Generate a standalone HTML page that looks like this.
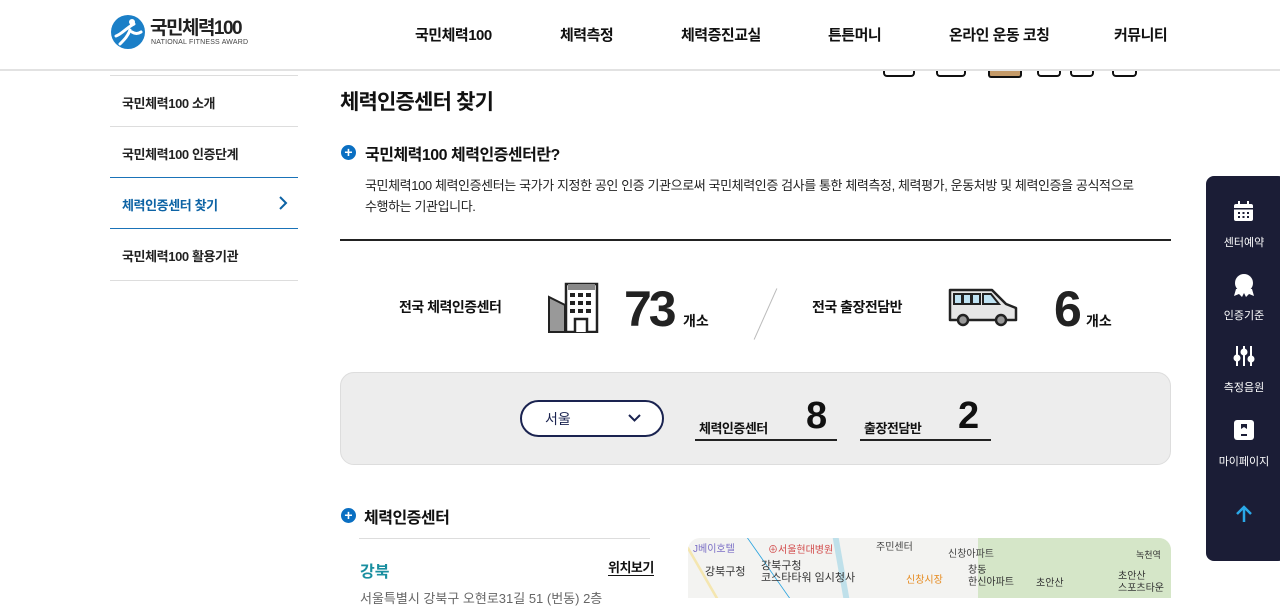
<!DOCTYPE html>
<html><head><meta charset="utf-8"><style>
*{margin:0;padding:0;box-sizing:border-box}
body{width:1280px;height:592px;overflow:hidden;background:#fff;font-family:"Liberation Sans","Noto Sans CJK KR",sans-serif;color:#111;position:relative}
.abs{position:absolute}
.hdr{position:absolute;left:0;top:0;width:1280px;height:71px;border-bottom:2px solid #e2e2e2;background:#fff;z-index:3}
.nav{position:absolute;top:24px;font-size:15px;font-weight:bold;color:#111;letter-spacing:-0.5px}
.side a{position:absolute;left:110px;width:188px;font-size:13px;font-weight:bold;color:#222;padding-left:12px;letter-spacing:-0.4px}
.hl{position:absolute;height:1px;background:#ddd}
.plus{position:absolute;width:15px;height:15px;border-radius:50%;background:#0a6fc2;color:#fff;font-size:14px;line-height:15px;text-align:center;font-weight:bold}
</style></head><body>
<div class="hdr">
 <svg class="abs" style="left:110px;top:14px" width="36" height="36" viewBox="0 0 36 36"><circle cx="18" cy="18" r="17" fill="#1b7fc7"/><path d="M6 22c6-2 10-8 18-12M10 30c4-4 8-8 10-14M22 18c3 2 6 2 9 0" stroke="#fff" stroke-width="3" fill="none" stroke-linecap="round"/><circle cx="22" cy="8" r="3" fill="#fff"/></svg>
 <div class="abs" style="left:150px;top:13px;font-size:19px;font-weight:bold;letter-spacing:-1.5px;color:#222">국민체력100</div>
 <div class="abs" style="left:151px;top:39px;font-size:7px;color:#444;letter-spacing:.2px">NATIONAL FITNESS AWARD</div>
 <div class="nav" style="left:415px">국민체력100</div>
 <div class="nav" style="left:560px">체력측정</div>
 <div class="nav" style="left:681px">체력증진교실</div>
 <div class="nav" style="left:828px">튼튼머니</div>
 <div class="nav" style="left:949px">온라인 운동 코칭</div>
 <div class="nav" style="left:1114px">커뮤니티</div>
</div>
<div class="abs" style="left:883px;top:68px;width:32px;height:9px;border:2px solid #111;border-top:none;border-radius:0 0 4px 4px"></div>
<div class="abs" style="left:936px;top:68px;width:30px;height:9px;border:2px solid #111;border-top:none;border-radius:0 0 4px 4px"></div>
<div class="abs" style="left:988px;top:68px;width:34px;height:10px;background:#c49a68;border:2px solid #111;border-top:none;border-radius:0 0 3px 3px"></div>
<div class="abs" style="left:1037px;top:68px;width:24px;height:9px;border:2px solid #111;border-top:none;border-radius:0 0 4px 4px"></div>
<div class="abs" style="left:1070px;top:68px;width:24px;height:9px;border:2px solid #111;border-top:none;border-radius:0 0 4px 4px"></div>
<div class="abs" style="left:1112px;top:68px;width:25px;height:9px;border:2px solid #111;border-top:none;border-radius:0 0 4px 4px"></div>

<div class="side">
 <div class="hl" style="left:110px;top:75px;width:188px"></div>
 <a style="top:93px">국민체력100 소개</a>
 <div class="hl" style="left:110px;top:126px;width:188px"></div>
 <a style="top:144px">국민체력100 인증단계</a>
 <div class="hl" style="left:110px;top:177px;width:188px;background:#1a73b8"></div>
 <a style="top:195px;color:#0d63a5">체력인증센터 찾기</a>
 <svg class="abs" style="left:278px;top:196px" width="10" height="14"><path d="M2 1l6 6-6 6" stroke="#0d63a5" stroke-width="2" fill="none"/></svg>
 <div class="hl" style="left:110px;top:228px;width:188px;background:#1a73b8"></div>
 <a style="top:246px">국민체력100 활용기관</a>
 <div class="hl" style="left:110px;top:280px;width:188px"></div>
</div>

<div class="abs" style="left:340px;top:86px;font-size:21px;font-weight:bold;letter-spacing:-.8px">체력인증센터 찾기</div>
<div class="plus" style="left:341px;top:145px">+</div>
<div class="abs" style="left:365px;top:141px;font-size:16px;font-weight:bold;letter-spacing:-.5px">국민체력100 체력인증센터란?</div>
<div class="abs" style="left:365px;top:175px;width:820px;font-size:13px;line-height:21px;color:#222;letter-spacing:-0.4px">국민체력100 체력인증센터는 국가가 지정한 공인 인증 기관으로써 국민체력인증 검사를 통한 체력측정, 체력평가, 운동처방 및 체력인증을 공식적으로<br>수행하는 기관입니다.</div>
<div class="abs" style="left:340px;top:239px;width:831px;height:2px;background:#222"></div>

<div class="abs" style="left:399px;top:297px;font-size:14px;font-weight:bold;letter-spacing:-.5px">전국 체력인증센터</div>
<svg class="abs" style="left:548px;top:281px" width="52" height="52" viewBox="0 0 52 52"><path d="M1 16l16 8v27H1z" fill="#999" stroke="#222" stroke-width="2"/><rect x="18" y="3" width="31" height="48" fill="#fff" stroke="#222" stroke-width="2.5"/><rect x="20" y="3" width="27" height="6" fill="#888"/><g fill="#222"><rect x="22" y="12" width="5" height="4"/><rect x="30" y="12" width="5" height="4"/><rect x="38" y="12" width="5" height="4"/><rect x="22" y="20" width="5" height="4"/><rect x="30" y="20" width="5" height="4"/><rect x="38" y="20" width="5" height="4"/><rect x="22" y="28" width="5" height="4"/><rect x="30" y="28" width="5" height="4"/><rect x="38" y="28" width="5" height="4"/></g><path d="M27 51V38h12v13" fill="#fff" stroke="#222" stroke-width="2.5"/></svg>
<div class="abs" style="left:624px;top:280px;font-size:50px;font-weight:bold;letter-spacing:-3px;color:#222">73</div>
<div class="abs" style="left:683px;top:311px;font-size:14px;font-weight:bold">개소</div>
<div class="abs" style="left:765px;top:286px;width:1px;height:56px;background:#bbb;transform:rotate(24deg)"></div>
<div class="abs" style="left:812px;top:297px;font-size:14px;font-weight:bold;letter-spacing:-.5px">전국 출장전담반</div>
<svg class="abs" style="left:947px;top:286px" width="72" height="42" viewBox="0 0 72 42"><path d="M3 4h42l14 14 10 4v12H3z" fill="#e6e6e6" stroke="#222" stroke-width="2.5" stroke-linejoin="round"/><g fill="#bfe2f2" stroke="#222" stroke-width="2"><rect x="7" y="8" width="8" height="10"/><rect x="16" y="8" width="8" height="10"/><rect x="25" y="8" width="8" height="10"/><path d="M36 8h8l8 10H36z"/></g><circle cx="16" cy="34" r="5" fill="#999" stroke="#222" stroke-width="2.5"/><circle cx="54" cy="34" r="5" fill="#999" stroke="#222" stroke-width="2.5"/></svg>
<div class="abs" style="left:1054px;top:280px;font-size:50px;font-weight:bold;color:#222">6</div>
<div class="abs" style="left:1086px;top:311px;font-size:14px;font-weight:bold">개소</div>

<div class="abs" style="left:340px;top:372px;width:831px;height:93px;background:#ededed;border:1px solid #ddd;border-radius:14px"></div>
<div class="abs" style="left:520px;top:400px;width:144px;height:37px;border:2px solid #1a2350;border-radius:19px;background:#fff"></div>
<div class="abs" style="left:545px;top:409px;font-size:14px;color:#1a2350">서울</div>
<svg class="abs" style="left:628px;top:414px" width="13" height="9"><path d="M1 1l5.5 5.5L12 1" stroke="#1a2350" stroke-width="2" fill="none"/></svg>
<div class="abs" style="left:699px;top:418px;font-size:13px;font-weight:bold;letter-spacing:-.5px">체력인증센터</div>
<div class="abs" style="left:806px;top:395px;font-size:38px;font-weight:bold">8</div>
<div class="abs" style="left:695px;top:439px;width:142px;height:2px;background:#222"></div>
<div class="abs" style="left:864px;top:418px;font-size:13px;font-weight:bold;letter-spacing:-.5px">출장전담반</div>
<div class="abs" style="left:958px;top:395px;font-size:38px;font-weight:bold">2</div>
<div class="abs" style="left:860px;top:439px;width:131px;height:2px;background:#222"></div>

<div class="plus" style="left:341px;top:508px">+</div>
<div class="abs" style="left:364px;top:504px;font-size:16px;font-weight:bold;letter-spacing:-.5px">체력인증센터</div>
<div class="hl" style="left:359px;top:538px;width:291px"></div>
<div class="abs" style="left:360px;top:558px;font-size:16px;font-weight:bold;color:#1a8fa0">강북</div>
<div class="abs" style="left:608px;top:560px;font-size:13px;font-weight:bold;border-bottom:1.5px solid #111;line-height:15px;letter-spacing:-.5px">위치보기</div>
<div class="abs" style="left:360px;top:588px;font-size:13px;color:#666">서울특별시 강북구 오현로31길 51 (번동) 2층</div>

<div class="abs" style="left:688px;top:538px;width:483px;height:60px;background:#f3f3f1;border-radius:12px 12px 0 0;overflow:hidden">
 <div class="abs" style="left:290px;top:0;width:200px;height:60px;background:#d5e6c8"></div>
 <div class="abs" style="left:150px;top:0;width:6px;height:60px;background:#bfe0ea;transform:skewX(10deg)"></div>
 <div class="abs" style="left:10px;top:0;width:3px;height:60px;background:#f4e6b0;transform:skewX(30deg)"></div>
 <div class="abs" style="left:80px;top:0;width:1px;height:60px;background:#29a3df;transform:skewX(35deg)"></div>
 <div class="abs" style="left:5px;top:2px;font-size:10px;color:#7b6fc6">J베이호텔</div>
 <div class="abs" style="left:80px;top:3px;font-size:10px;color:#d24b4b">⊕서울현대병원</div>
 <div class="abs" style="left:188px;top:0;font-size:10px;color:#444">주민센터</div>
 <div class="abs" style="left:260px;top:7px;font-size:10px;color:#444">신창아파트</div>
 <div class="abs" style="left:17px;top:25px;font-size:11px;color:#333">강북구청</div>
 <div class="abs" style="left:73px;top:22px;font-size:11px;color:#333;line-height:12px">강북구청<br>코스타타워 임시청사</div>
 <div class="abs" style="left:218px;top:33px;font-size:10px;color:#e68a1e">신창시장</div>
 <div class="abs" style="left:280px;top:27px;font-size:10px;color:#333;line-height:12px">창동<br>한신아파트</div>
 <div class="abs" style="left:348px;top:36px;font-size:10px;color:#333">초안산</div>
 <div class="abs" style="left:430px;top:33px;font-size:10px;color:#333;line-height:12px">초안산<br>스포츠타운</div>
 <div class="abs" style="left:448px;top:10px;font-size:9px;color:#333">녹천역</div>
</div>

<div class="abs" style="left:1206px;top:176px;width:80px;height:385px;background:#1b1d36;border-radius:8px"></div>
<svg class="abs" style="left:1233px;top:201px" width="21" height="21" viewBox="0 0 21 21"><rect x="1" y="3" width="19" height="17" rx="2" fill="#fff"/><rect x="5" y="0" width="2" height="5" fill="#fff"/><rect x="14" y="0" width="2" height="5" fill="#fff"/><rect x="1" y="7" width="19" height="1.5" fill="#1b1d36"/><g fill="#1b1d36"><rect x="5" y="11" width="2" height="2"/><rect x="9.5" y="11" width="2" height="2"/><rect x="14" y="11" width="2" height="2"/><rect x="5" y="15" width="2" height="2"/><rect x="9.5" y="15" width="2" height="2"/><rect x="14" y="15" width="2" height="2"/></g></svg>
<div class="abs" style="left:1206px;top:234px;width:76px;text-align:center;font-size:11px;color:#fff">센터예약</div>
<svg class="abs" style="left:1233px;top:273px" width="22" height="26" viewBox="0 0 22 26"><circle cx="11" cy="10" r="9" fill="#fff"/><path d="M3 16l-2 7 5-2 3 3 2-4 2 4 3-3 5 2-2-7z" fill="#fff"/></svg>
<div class="abs" style="left:1206px;top:307px;width:76px;text-align:center;font-size:11px;color:#fff">인증기준</div>
<svg class="abs" style="left:1233px;top:345px" width="22" height="22" viewBox="0 0 22 22" stroke="#fff" stroke-width="2"><path d="M4 1v20M11 1v20M18 1v20"/><circle cx="4" cy="13" r="2.5" fill="#fff"/><circle cx="11" cy="7" r="2.5" fill="#fff"/><circle cx="18" cy="14" r="2.5" fill="#fff"/></svg>
<div class="abs" style="left:1206px;top:379px;width:76px;text-align:center;font-size:11px;color:#fff">측정음원</div>
<svg class="abs" style="left:1233px;top:419px" width="22" height="22" viewBox="0 0 22 22"><rect x="1" y="1" width="20" height="20" rx="3" fill="#fff"/><path d="M8 5h6v5l-3-2-3 2z" fill="#1b1d36"/><rect x="8" y="15" width="6" height="2" fill="#1b1d36"/></svg>
<div class="abs" style="left:1206px;top:453px;width:76px;text-align:center;font-size:11px;color:#fff">마이페이지</div>
<svg class="abs" style="left:1235px;top:505px" width="18" height="18" viewBox="0 0 18 18"><path d="M9 17V2M2 9l7-7 7 7" stroke="#2aa8e8" stroke-width="2.5" fill="none"/></svg>
</body></html>
